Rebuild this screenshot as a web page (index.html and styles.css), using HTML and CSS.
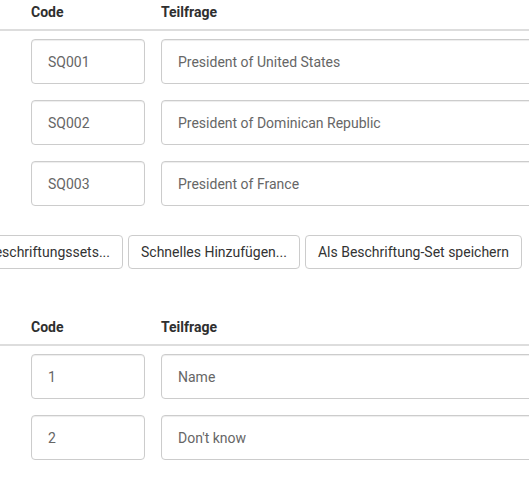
FILE: index.html
```html
<!DOCTYPE html>
<html lang="de">
<head>
    <meta charset="UTF-8">
    <title>Teilfragen</title>
    <link rel="stylesheet" href="styles.css">
</head>
<body>

    <table class="answers">
        <thead>
            <tr>
                <th class="handle"></th>
                <th class="col-code">Code</th>
                <th>Teilfrage</th>
            </tr>
        </thead>
        <tbody>
            <tr>
                <td class="handle"></td>
                <td class="col-code"><input type="text" class="code-input" value="SQ001"></td>
                <td><input type="text" class="text-input" value="President of United States"></td>
            </tr>
            <tr>
                <td class="handle"></td>
                <td class="col-code"><input type="text" class="code-input" value="SQ002"></td>
                <td><input type="text" class="text-input" value="President of Dominican Republic"></td>
            </tr>
            <tr>
                <td class="handle"></td>
                <td class="col-code"><input type="text" class="code-input" value="SQ003"></td>
                <td><input type="text" class="text-input" value="President of France"></td>
            </tr>
        </tbody>
    </table>

    <div class="actions">
        <button>Vordefinierte Beschriftungssets...</button>
        <button>Schnelles Hinzufügen...</button>
        <button>Als Beschriftung-Set speichern</button>
    </div>

    <table class="answers">
        <thead>
            <tr>
                <th class="handle"></th>
                <th class="col-code">Code</th>
                <th>Teilfrage</th>
            </tr>
        </thead>
        <tbody>
            <tr>
                <td class="handle"></td>
                <td class="col-code"><input type="text" class="code-input" value="1"></td>
                <td><input type="text" class="text-input" value="Name"></td>
            </tr>
            <tr>
                <td class="handle"></td>
                <td class="col-code"><input type="text" class="code-input" value="2"></td>
                <td><input type="text" class="text-input" value="Don't know"></td>
            </tr>
        </tbody>
    </table>

</body>
</html>
```

FILE: styles.css
```css
body {
    font-family: 'Roboto', 'Liberation Sans', sans-serif;
    font-size: 14px;
    color: #333;
    background: #fff;
    margin: 0;
    overflow: hidden;
}

.answers {
    border-collapse: collapse;
    width: 700px;
}

.answers th {
    text-align: left;
    font-weight: bold;
    font-size: 14px;
    line-height: 20px;
    padding: 2px 8px 7px;
    border-bottom: 2px solid #ddd;
    color: #2f2f2f;
}

.answers td {
    padding: 8px;
}

.answers .handle {
    width: 7px;
    padding: 0 8px;
}

.answers .col-code {
    width: 114px;
}

input[type="text"] {
    box-sizing: border-box;
    height: 45px;
    padding: 0 16px;
    border: 1px solid #ccc;
    border-radius: 4px;
    box-shadow: inset 0 1px 1px rgba(0, 0, 0, 0.075);
    font-family: inherit;
    font-size: 14px;
    color: #666;
    display: block;
}

.code-input {
    width: 114px;
}

.text-input {
    width: 100%;
}

/* button row under the first table, overflowing to the left */
.actions {
    display: flex;
    justify-content: flex-end;
    gap: 5px;
    width: 522px;
    margin: 21px 0 46px;
}

.actions button {
    flex-shrink: 0;
    height: 34px;
    padding: 0 12px;
    background: #fff;
    border: 1px solid #ccc;
    border-radius: 4px;
    font-family: inherit;
    font-size: 14px;
    color: #333;
    white-space: nowrap;
}
```
